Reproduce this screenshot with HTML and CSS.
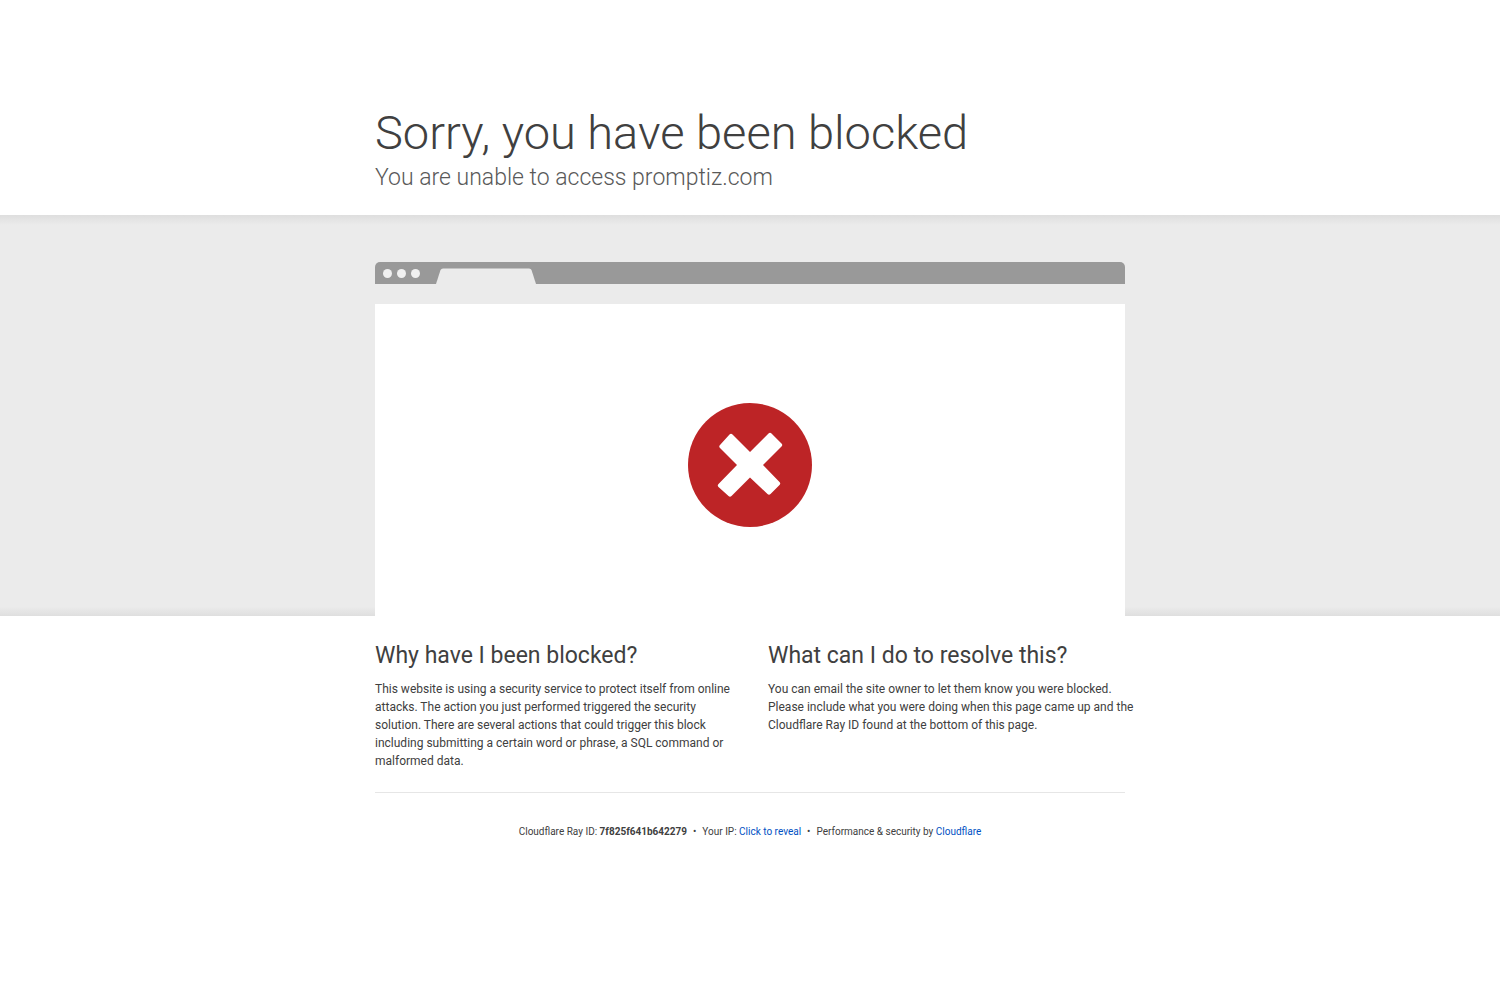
FILE: index.html
```
<!DOCTYPE html>
<html lang="en">

<head>
    <meta charset="UTF-8">
    <meta name="viewport" content="width=device-width, initial-scale=1.0">
    <title>Sorry, you have been blocked</title>
    <link rel="stylesheet" href="styles.css">
</head>

<body>

    <header class="wrapper header">
        <h1>Sorry, you have been blocked</h1>
        <h2 class="subheadline">You are unable to access promptiz.com</h2>
    </header>

    <section class="highlight">
        <div class="wrapper browser">
            <div class="browser-bar">
                <span class="dot"></span>
                <span class="dot"></span>
                <span class="dot"></span>
                <svg class="tab" width="100" height="16" viewBox="0 0 100 16" aria-hidden="true">
                    <path d="M0 16 L4.500 2 Q5.200 0.500 7 0.500 H93 Q95 0.500 95.500 2 L100 16 Z" />
                </svg>
            </div>
            <div class="browser-page">
                <svg class="error-icon" width="124" height="124" viewBox="0 0 124 124" role="img" aria-label="Blocked">
                    <circle cx="62" cy="62" r="62" fill="#bd2426" />
                    <path d="M41.500 31.500 Q43 30 44.500 31.500 L62 49 L80.500 30.500 Q82 29 83.500 30.500 L93.500 40.500 Q95 42 93.500 43.500 L75 62 L91.500 79 Q93 80.500 91.500 82 L82.500 91 Q81 92.500 79.500 91 L62 74.500 L43.500 93 Q42 94.500 40.500 93 L30.500 84 Q29 82.500 30.500 81 L49 62 L32 45 Q30.500 43.500 32 42 Z" fill="#fff" />
                </svg>
            </div>
        </div>
    </section>

    <main class="wrapper columns">
        <section>
            <h2>Why have I been blocked?</h2>
            <p>This website is using a security service to protect itself from online attacks. The action you just performed triggered the security solution. There are several actions that could trigger this block including submitting a certain word or phrase, a SQL command or malformed data.</p>
        </section>
        <section>
            <h2>What can I do to resolve this?</h2>
            <p>You can email the site owner to let them know you were blocked. Please include what you were doing when this page came up and the Cloudflare Ray ID found at the bottom of this page.</p>
        </section>
    </main>

    <footer class="wrapper footer">
        <span>Cloudflare Ray ID: <strong>7f825f641b642279</strong></span>
        <span>&bull;</span>
        <span>Your IP: <button type="button">Click to reveal</button></span>
        <span>&bull;</span>
        <span>Performance &amp; security by <a href="#">Cloudflare</a></span>
    </footer>

</body>

</html>
```
FILE: styles.css
```
* {
    box-sizing: border-box;
    margin: 0;
    padding: 0;
}

body {
    font-family: Roboto, "Liberation Sans", sans-serif;
    font-size: 12px;
    line-height: 18px;
    color: #404040;
    background-color: #fff;
}

.wrapper {
    width: 90%;
    max-width: 750px;
    margin: 0 auto;
}

.header {
    padding: 103px 0 22px;
}

h1 {
    font-size: 47px;
    font-weight: 300;
    line-height: 60px;
}

h2 {
    font-size: 23px;
    font-weight: 400;
    line-height: 30px;
}

.subheadline {
    font-weight: 300;
    color: #595959;
}

.highlight {
    padding-top: 47px;
    background-color: #ebebeb;
    background-image: linear-gradient(to bottom, #dedede, #ebebeb 10px), linear-gradient(to top, #dedede, #ebebeb 10px);
    background-size: 100% 50%;
    background-position: top, bottom;
    background-repeat: no-repeat;
}

.browser-bar {
    display: flex;
    align-items: center;
    gap: 5px;
    height: 22px;
    padding-left: 8px;
    background-color: #999;
    border-radius: 5px 5px 0 0;
}

.dot {
    width: 9px;
    height: 9px;
    background-color: #f0f0f0;
    border-radius: 50%;
}

.tab {
    align-self: flex-end;
    margin-left: 11px;
    fill: #ebebeb;
}

.browser-page {
    display: flex;
    justify-content: center;
    margin-top: 20px;
    padding: 99px 0 89px;
    background-color: #fff;
}

.columns {
    display: grid;
    grid-template-columns: 1fr 1fr;
    gap: 36px;
    padding: 25px 0 22px;
    border-bottom: 1px solid #e6e6e6;
}

.columns p {
    margin: 9px -10px 0 0;
}

.footer {
    display: flex;
    flex-wrap: wrap;
    justify-content: center;
    gap: 6px;
    padding: 30px 0;
    font-size: 10px;
}

.footer a,
.footer button {
    font: inherit;
    color: #0051c3;
    text-decoration: none;
    background: none;
    border: none;
    cursor: pointer;
}
```
